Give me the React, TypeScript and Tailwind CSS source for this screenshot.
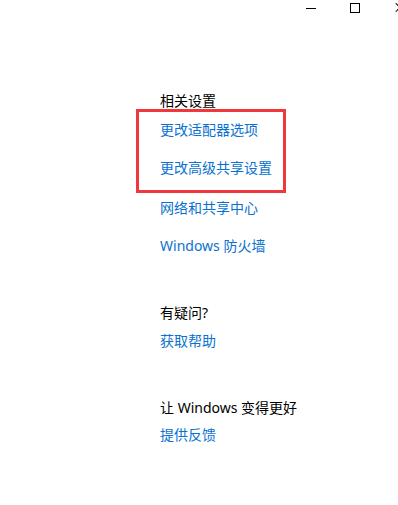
import React from "react";

const linkClass = "block text-[14px] leading-[20px] text-[#0a72d0] hover:underline";

const App: React.FC = () =>
{
    return (
        <div className="relative h-[505px] w-[398px] overflow-hidden bg-white font-['Noto_Sans','Noto_Sans_CJK_SC',sans-serif] text-[14px] text-black">
            {/* window controls */}
            <div className="flex h-[16px] items-center justify-end gap-[34px]">
                <div className="h-px w-[10px] bg-black" />
                <div className="h-[10px] w-[10px] border border-black" />
                <div className="relative h-[10px] w-[4px] overflow-hidden">
                    <div className="absolute left-[0px] top-[4px] h-px w-[12px] rotate-45 bg-black" />
                    <div className="absolute left-[0px] top-[4px] h-px w-[12px] -rotate-45 bg-black" />
                </div>
            </div>

            <div className="flex flex-col pl-[160px] pt-[75px]">
                <div className="leading-[20px]">相关设置</div>
                <a className={`${linkClass} mt-[9px]`}>更改适配器选项</a>
                <a className={`${linkClass} mt-[18px]`}>更改高级共享设置</a>
                <a className={`${linkClass} mt-[20px]`}>网络和共享中心</a>
                <a className={`${linkClass} mt-[18px]`}>Windows 防火墙</a>

                <div className="mt-[47px] leading-[20px]">有疑问?</div>
                <a className={`${linkClass} mt-[8px]`}>获取帮助</a>

                <div className="mt-[47px] leading-[20px]">让 Windows 变得更好</div>
                <a className={`${linkClass} mt-[7px]`}>提供反馈</a>
            </div>

            {/* red highlight annotation */}
            <div className="absolute left-[136px] top-[109px] h-[84px] w-[150px] border-[3px] border-[#f0383c]" />
        </div>
    );
};

export default App;
